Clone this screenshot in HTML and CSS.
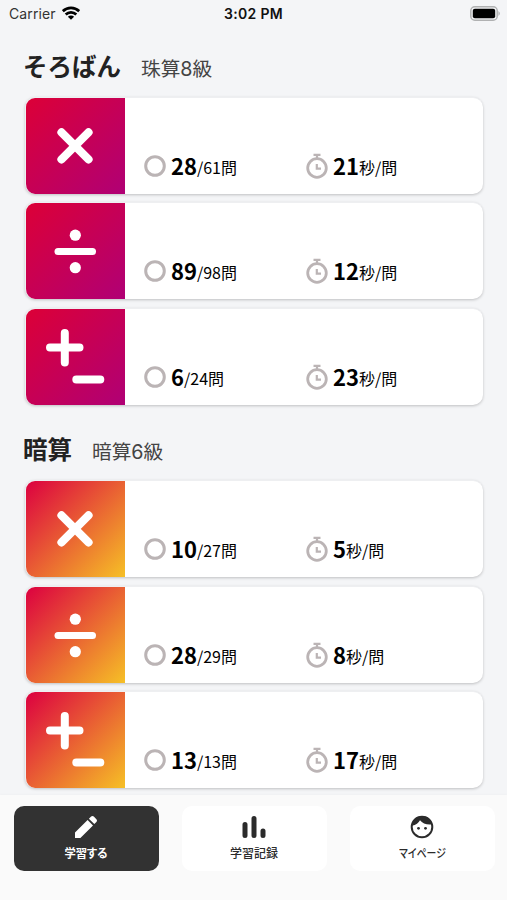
FILE: index.html
```html
<!DOCTYPE html>
<html lang="ja">
<head>
    <meta charset="UTF-8">
    <meta name="viewport" content="width=device-width, initial-scale=1.0">
    <title>学習する</title>
    <link rel="stylesheet" href="styles.css">
</head>
<body>
    <svg class="defs" width="0" height="0">
        <symbol id="times" viewBox="0 0 100 97">
            <path d="M35.500 34.300 62.500 61.300M62.500 34.300 35.500 61.300" stroke="#fff" stroke-width="8.200" stroke-linecap="round"/>
        </symbol>
        <symbol id="divide" viewBox="0 0 100 97">
            <path d="M32 48.500H66.500" stroke="#fff" stroke-width="7" stroke-linecap="round"/>
            <circle cx="49.300" cy="32.200" r="5.600" fill="#fff"/>
            <circle cx="49.300" cy="64.700" r="5.600" fill="#fff"/>
        </symbol>
        <symbol id="plusminus" viewBox="0 0 100 97">
            <path d="M24 38.500H53.500M38.800 24V53.500M50.300 70.500H74.300" stroke="#fff" stroke-width="8" stroke-linecap="round"/>
        </symbol>
        <symbol id="ring" viewBox="0 0 22 22">
            <circle cx="11" cy="11" r="9.300" fill="none" stroke="#bbb4b5" stroke-width="3"/>
        </symbol>
        <symbol id="watch" viewBox="0 0 22 26">
            <circle cx="11" cy="15" r="9.300" fill="none" stroke="#bbb4b5" stroke-width="2.800"/>
            <path d="M7.500 1.800H14.500M11 2V6M10.800 11V15.700H15" fill="none" stroke="#bbb4b5" stroke-width="2.200"/>
        </symbol>
    </svg>

    <div class="screen">
        <header class="status">
            <div class="carrier">
                <span>Carrier</span>
                <svg width="18" height="14" viewBox="0 0 18 14" fill="none" stroke="#000" stroke-width="2.700">
                    <path d="M.8 5.200A11.800 11.800 0 0 1 17.200 5.200M3.700 8.500A7.600 7.600 0 0 1 14.300 8.500"/>
                    <path d="M9 13.800 5.900 10.700A4.400 4.400 0 0 1 12.100 10.700Z" fill="#000" stroke="none"/>
                </svg>
            </div>
            <div class="time">3:02 PM</div>
            <div class="battery">
                <svg width="31" height="15" viewBox="0 0 31 15">
                    <rect x=".8" y=".8" width="26.400" height="13.400" rx="4" fill="#f4f5f7" stroke="#b0b1b2" stroke-width="1.500"/>
                    <rect x="2.800" y="2.800" width="22.400" height="9.400" rx="2" fill="#000"/>
                    <path d="M28.500 5Q31 7.500 28.500 10Z" fill="#a4a5a6"/>
                </svg>
            </div>
        </header>

        <main class="content">
            <section class="group soroban">
                <div class="heading">
                    <h2>そろばん</h2>
                    <span class="grade">珠算8級</span>
                </div>
                <div class="card">
                    <div class="tile"><svg><use href="#times"/></svg></div>
                    <div class="stat score"><svg class="ring"><use href="#ring"/></svg><b>28</b><span>/61問</span></div>
                    <div class="stat"><svg class="watch"><use href="#watch"/></svg><b>21</b><span>秒/問</span></div>
                </div>
                <div class="card">
                    <div class="tile"><svg><use href="#divide"/></svg></div>
                    <div class="stat score"><svg class="ring"><use href="#ring"/></svg><b>89</b><span>/98問</span></div>
                    <div class="stat"><svg class="watch"><use href="#watch"/></svg><b>12</b><span>秒/問</span></div>
                </div>
                <div class="card">
                    <div class="tile"><svg><use href="#plusminus"/></svg></div>
                    <div class="stat score"><svg class="ring"><use href="#ring"/></svg><b>6</b><span>/24問</span></div>
                    <div class="stat"><svg class="watch"><use href="#watch"/></svg><b>23</b><span>秒/問</span></div>
                </div>
            </section>

            <section class="group anzan">
                <div class="heading">
                    <h2>暗算</h2>
                    <span class="grade">暗算6級</span>
                </div>
                <div class="card">
                    <div class="tile"><svg><use href="#times"/></svg></div>
                    <div class="stat score"><svg class="ring"><use href="#ring"/></svg><b>10</b><span>/27問</span></div>
                    <div class="stat"><svg class="watch"><use href="#watch"/></svg><b>5</b><span>秒/問</span></div>
                </div>
                <div class="card">
                    <div class="tile"><svg><use href="#divide"/></svg></div>
                    <div class="stat score"><svg class="ring"><use href="#ring"/></svg><b>28</b><span>/29問</span></div>
                    <div class="stat"><svg class="watch"><use href="#watch"/></svg><b>8</b><span>秒/問</span></div>
                </div>
                <div class="card">
                    <div class="tile"><svg><use href="#plusminus"/></svg></div>
                    <div class="stat score"><svg class="ring"><use href="#ring"/></svg><b>13</b><span>/13問</span></div>
                    <div class="stat"><svg class="watch"><use href="#watch"/></svg><b>17</b><span>秒/問</span></div>
                </div>
            </section>
        </main>

        <nav class="tabs">
            <a class="tab active">
                <svg viewBox="0 0 24 24" fill="currentColor">
                    <path d="M1 17.600V23H6.400L19 10.400 13.600 5ZM22.400 6.900C23.200 6.100 23.200 5 22.400 4.200L19.800 1.600C19 .8 17.900 .8 17.100 1.600L14.900 3.700 20.300 9.100Z"/>
                </svg>
                <span>学習する</span>
            </a>
            <a class="tab">
                <svg viewBox="0 0 24 24" fill="none" stroke="currentColor" stroke-width="5" stroke-linecap="round">
                    <path d="M3 9.500V20.500M12 3.500V20.500M21 16V20.500"/>
                </svg>
                <span>学習記録</span>
            </a>
            <a class="tab">
                <svg viewBox="0 0 24 24" fill="currentColor">
                    <circle cx="12" cy="12" r="10.300" fill="none" stroke="currentColor" stroke-width="2"/>
                    <path d="M2 10.800C6 9.800 8.700 7.800 10 5.200C12.500 8.500 17 10.200 22.300 9.400C21 4 17 1 12 1C7 1 2.500 4.500 2 10.800Z"/>
                    <circle cx="8.500" cy="13.300" r="1.400"/>
                    <circle cx="15.500" cy="13.300" r="1.400"/>
                </svg>
                <span class="kana">マイページ</span>
            </a>
        </nav>
    </div>
</body>
</html>
```

FILE: styles.css
```css
* {
    box-sizing: border-box;
}
body {
    margin: 0;
    background-color: #f4f5f7;
    color: #222;
    font-family: "Noto Sans CJK JP", sans-serif;
}
svg {
    display: block;
    flex: none;
}
.defs {
    position: absolute;
}
.screen {
    display: flex;
    flex-direction: column;
    height: 900px;
    overflow: hidden;
}
.status {
    display: grid;
    grid-template-columns: 1fr auto 1fr;
    align-items: center;
    height: 26px;
    padding: 0 6px 0 9px;
    font-family: Inter, "Liberation Sans", sans-serif;
    font-size: 14px;
    flex: none;
}
.carrier {
    display: flex;
    align-items: center;
    gap: 6px;
    letter-spacing: 0.1px;
    color: #333;
}
.time {
    margin-right: 3px;
    font-weight: 600;
    letter-spacing: 0.3px;
    color: #111;
}
.battery {
    justify-self: end;
}
.content {
    height: 769px;
    flex: none;
    overflow: hidden;
    padding: 0 24px 0 25px;
}
.heading {
    display: flex;
    align-items: baseline;
    gap: 20px;
    height: 71px;
    margin-left: -2px;
    padding-top: 22px;
}
h2 {
    margin: 0;
    font-size: 24.500px;
    font-weight: 700;
    line-height: 36px;
}
.grade {
    font-family: Inter, "Noto Sans CJK JP", sans-serif;
    font-size: 19.700px;
    line-height: 36px;
    font-weight: 400;
    color: #444;
}
.card {
    display: flex;
    height: 97px;
    margin-bottom: 8.300px;
    background-color: #fff;
    border: 1px solid #eeeff1;
    border-width: 1px 0 0 1px;
    border-radius: 10px;
    overflow: hidden;
    box-shadow: 0 1px 3px rgba(0, 0, 0, 0.22);
}
.tile {
    width: 99px;
    background-image: linear-gradient(135deg, #dc0037, #b00075);
    flex: none;
}
.tile svg {
    width: 100px;
    height: 97px;
}
.anzan .tile {
    background-image: linear-gradient(135deg, #dc0040, #f6c026);
}
.anzan .heading {
    height: 67.500px;
    padding-top: 18px;
}
.stat {
    display: flex;
    align-items: flex-start;
    padding-top: 51px;
    color: #000;
    line-height: 32px;
    white-space: nowrap;
}
.score {
    width: 162px;
    margin-left: 19px;
    flex: none;
}
.stat b {
    font-size: 22px;
    font-weight: 700;
}
.stat span {
    padding-top: 2px;
    font-size: 16px;
    font-weight: 400;
}
.ring {
    width: 22px;
    height: 22px;
    margin-right: 5px;
    margin-top: 6px;
}
.watch {
    width: 22px;
    height: 26px;
    margin-right: 5px;
    margin-top: 4px;
}
.tabs {
    display: flex;
    gap: 23px;
    flex: 1;
    padding: 11px 12px 29px 14px;
    background-color: #fafafa;
    box-shadow: 0 0 3px rgba(0, 0, 0, 0.04);
}
.tab {
    display: flex;
    flex-direction: column;
    align-items: center;
    flex: 1;
    height: 65px;
    padding-top: 9px;
    border-radius: 10px;
    background-color: #fff;
    color: #2b2b2b;
}
.tab svg {
    width: 24px;
    height: 24px;
    margin-left: -2px;
}
.tab span {
    margin-top: 5px;
    margin-left: -1px;
    font-size: 12px;
    line-height: 18px;
    font-weight: 500;
    font-feature-settings: "palt";
}
.tab.active span {
    margin-left: -2px;
    font-weight: 700;
    transform: scaleX(0.94);
}
.tab .kana {
    transform: scaleX(0.82);
}
.tab.active {
    background-color: #323232;
    color: #fff;
}
```
